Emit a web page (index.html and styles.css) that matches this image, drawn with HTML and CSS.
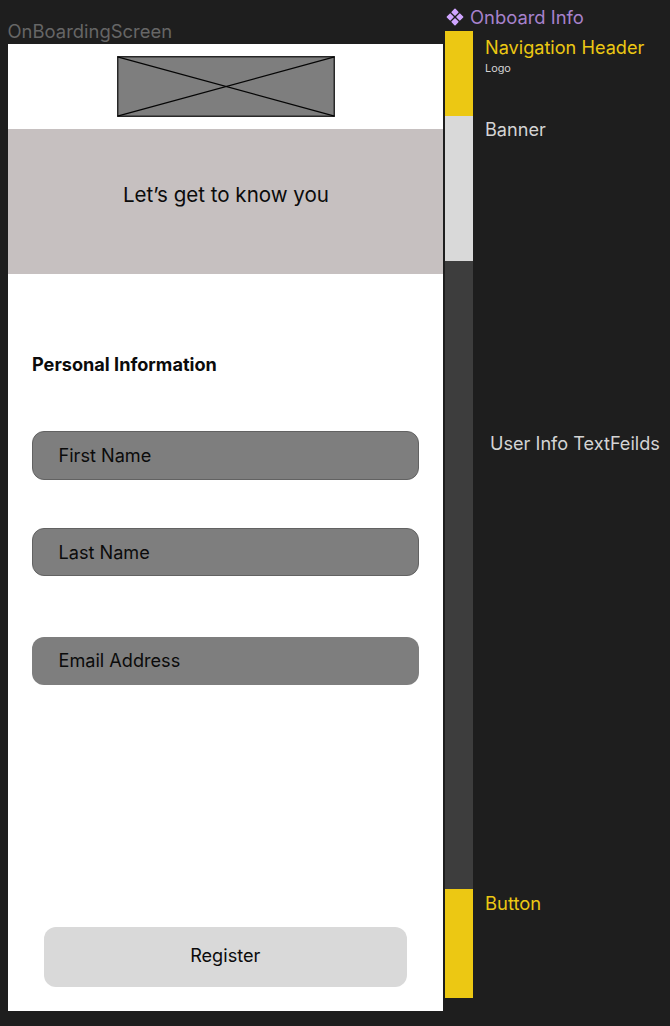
FILE: index.html
```html
<!DOCTYPE html>
<html lang="en">
<head>
<meta charset="utf-8">
<title>OnBoardingScreen</title>
<link rel="stylesheet" href="styles.css">
</head>
<body>
<main class="board">
  <section class="screen">
    <div class="frame-name"><span>OnBoardingScreen</span></div>
    <div class="phone">
      <header class="nav">
        <svg class="logo" width="218" height="61" viewBox="0 0 218 61">
          <rect x=".75" y=".75" width="216.5" height="59.5" fill="#7e7e7e" stroke="#161616" stroke-width="1.3"/>
          <path d="M.5 .8 217.5 60.2M.5 60.2 217.5 .8" stroke="#050505" stroke-width="1.2"/>
        </svg>
      </header>
      <div class="banner"><span>Let’s get to know you</span></div>
      <form class="form">
        <h1 class="title"><span>Personal Information</span></h1>
        <div class="field outlined"><span>First Name</span></div>
        <div class="field outlined last-name"><span>Last Name</span></div>
        <div class="field email"><span>Email Address</span></div>
        <div class="register"><span>Register</span></div>
      </form>
    </div>
  </section>
  <aside class="info">
    <div class="component-name">
      <svg width="18" height="18" viewBox="0 0 18 18" fill="#d0a5ff" stroke="#d0a5ff" stroke-width="1.6" stroke-linejoin="round">
        <path d="M9 1.4 11.8 4.2 9 7 6.2 4.2ZM4.2 6.2 7 9 4.2 11.8 1.4 9ZM13.8 6.2 16.6 9 13.8 11.8 11 9ZM9 11 11.8 13.8 9 16.6 6.2 13.8Z"/>
      </svg>
      <span>Onboard Info</span>
    </div>
    <div class="row nav-row"><i class="bar"></i><p class="label"><span>Navigation Header</span><small>Logo</small></p></div>
    <div class="row banner-row"><i class="bar"></i><p class="label"><span>Banner</span></p></div>
    <div class="row fields-row"><i class="bar"></i><p class="label"><span>User Info TextFeilds</span></p></div>
    <div class="row button-row"><i class="bar"></i><p class="label"><span>Button</span></p></div>
  </aside>
</main>
</body>
</html>
```
FILE: styles.css
```css
* { box-sizing: border-box; }
body { margin: 0; background: #1e1e1e; font-family: Inter, sans-serif; font-size: 18.14px; color: #0b0b0b; }
.board { display: flex; height: 1026px; padding-left: 7.5px; overflow: hidden; }
.screen { width: 437.5px; }
.frame-name { height: 44px; padding-top: 19px; font-size: 18.45px; line-height: 24px; color: #666; }
.phone { width: 435.5px; height: 967.4px; background: #fff; }
.nav { height: 84.7px; padding: 12px 0 0 109px; }
.logo { display: block; }
.banner { height: 145.3px; padding: 53px 0 0 1.4px; background: #c6c0c0; text-align: center; font-size: 20.55px; line-height: 26px; }
.form { padding: 78px 24px 0; }
.title { margin: 0 0 55.3px; font-size: 18.14px; line-height: 24px; font-weight: 700; }
.title span { padding-left: .5px; }
.field { height: 48.5px; padding-left: 27px; border-radius: 12px; background: #7e7e7e; line-height: 48px; }
.outlined { padding-left: 26px; border: 1px solid #626262; line-height: 46px; }
.last-name { margin-top: 48.2px; }
.email { margin-top: 60.5px; line-height: 46px; }
.register { height: 60.5px; margin: 241.5px 12px 0; border-radius: 12px; background: #d9d9d9; text-align: center; line-height: 56px; }
.info { width: 225px; }
.component-name { display: flex; gap: 6.3px; height: 31px; padding: 8px 0 0 .7px; font-size: 18.4px; line-height: 18px; color: #a782cc; }
.row { display: flex; gap: 12px; color: #d4d4d4; }
.bar { width: 28px; }
.label { display: flex; flex-direction: column; margin: 0; line-height: 24px; }
.label small { font-size: 10.9px; line-height: 14px; }
.nav-row { height: 84.5px; color: #ecc813; }
.nav-row .bar, .button-row .bar { background: #ecc813; }
.nav-row .label { padding-top: 4px; }
.nav-row small { margin-top: 2px; color: #d4d4d4; }
.banner-row { height: 145.5px; }
.banner-row .bar { background: #d9d9d9; }
.banner-row .label { padding-top: 1px; }
.fields-row { height: 628px; gap: 17px; }
.fields-row .bar { background: #3d3d3d; }
.fields-row .label { padding-top: 169.5px; }
.button-row { height: 109px; color: #ecc813; }
.button-row .label { padding-top: 2px; font-size: 18.4px; }
```
